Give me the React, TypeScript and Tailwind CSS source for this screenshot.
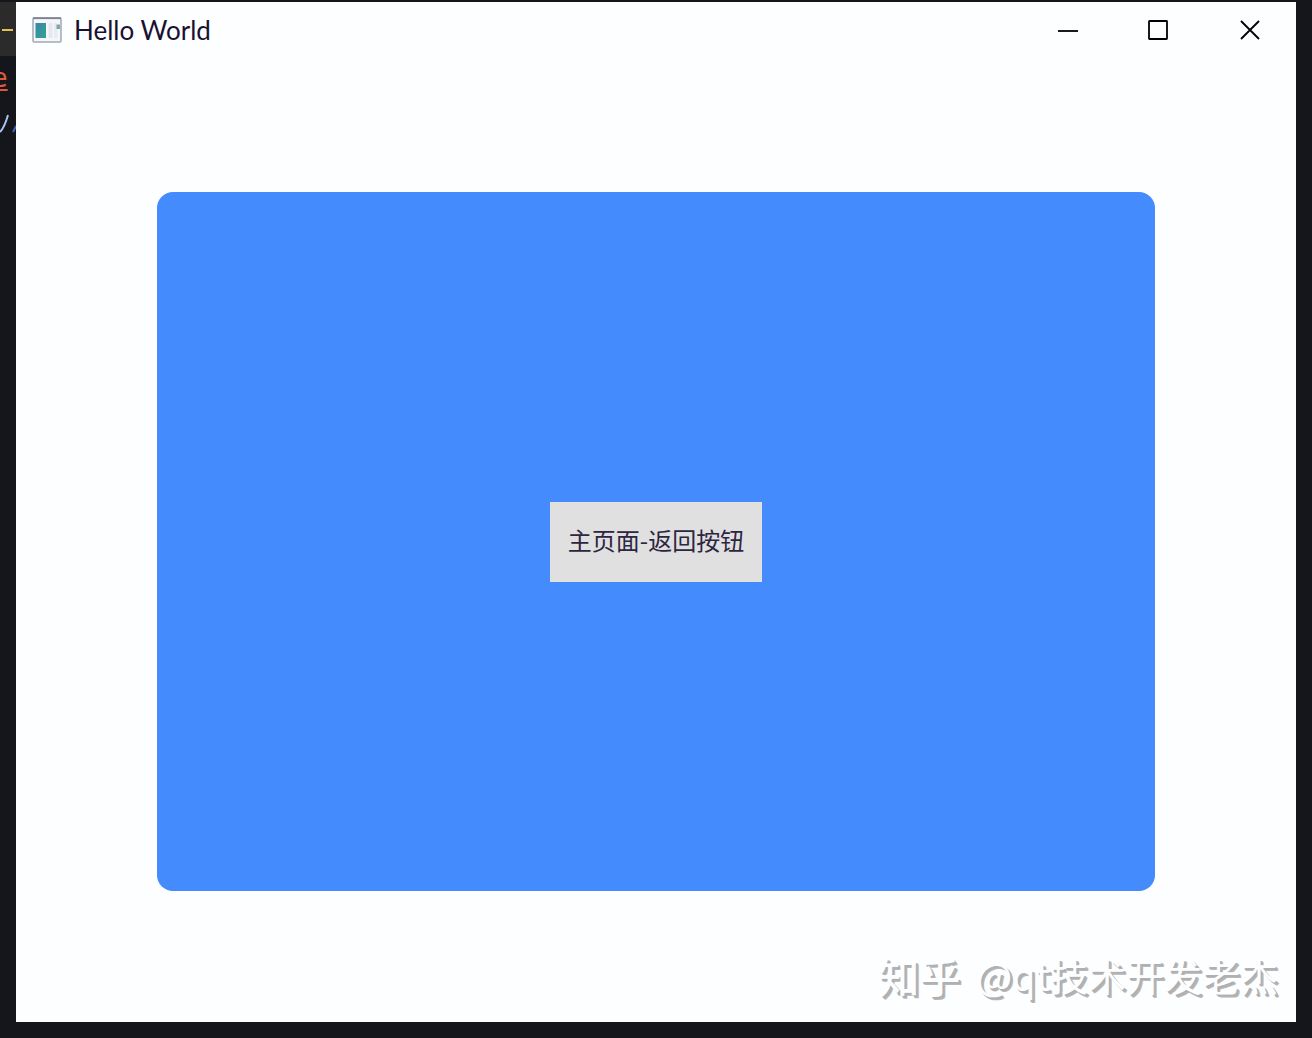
import type { ReactNode } from "react";

function AppIcon() {
  return (
    <svg width="30" height="26" viewBox="0 0 30 26" aria-hidden="true">
      <defs>
        <linearGradient id="pane" x1="0" y1="0" x2="1" y2="1">
          <stop offset="0" stopColor="#3a86a8" />
          <stop offset="1" stopColor="#34a391" />
        </linearGradient>
      </defs>
      <rect x="1" y="1" width="28" height="24" rx="1" fill="#f4f6fa" stroke="#a3a8b4" strokeWidth="1.5" />
      <path d="M1 1.2h28" stroke="#7d8292" strokeWidth="1.8" />
      <rect x="3.5" y="6" width="10.5" height="15" fill="url(#pane)" />
      <rect x="16.5" y="6" width="4" height="15" fill="#e6e8ee" />
      <rect x="22" y="6" width="3.5" height="15" fill="#e9ebf0" />
      <path d="M24.5 7.5h3.5v4.5h-3.5z" fill="#7fa6ab" />
    </svg>
  );
}

function WindowButton({ label, children }: { label: string; children: ReactNode }) {
  return (
    <button
      type="button"
      aria-label={label}
      className="flex h-14 w-[91px] items-center justify-center text-black hover:bg-neutral-200"
    >
      <svg width="22" height="22" viewBox="0 0 22 22" fill="none" stroke="currentColor" strokeWidth="1.8">
        {children}
      </svg>
    </button>
  );
}

function TitleBar() {
  return (
    <header className="flex h-14 items-center pr-px pl-4">
      <AppIcon />
      <h1 className="ml-3 flex-1 font-['Lato','Noto_Sans',sans-serif] text-[26px] leading-8 text-[#1a1030]">
        Hello World
      </h1>
      <WindowButton label="Minimize">
        <path d="M1 12h20" />
      </WindowButton>
      <WindowButton label="Maximize">
        <rect x="1" y="2" width="18" height="18" rx="0.5" />
      </WindowButton>
      <WindowButton label="Close">
        <path d="M2 2l18 18M20 2L2 20" />
      </WindowButton>
    </header>
  );
}

// the strip of the code editor that shows left of the window
function EditorEdge() {
  return (
    <div className="w-4 overflow-hidden font-['DejaVu_Sans_Mono',monospace] text-[26px]" aria-hidden="true">
      <div className="flex h-[54px] items-center bg-[#2b2b2c]">
        <svg width="16" height="4" viewBox="0 0 16 4">
          <path d="M2 3h11" stroke="#e3c04f" strokeWidth="2" />
        </svg>
      </div>
      <div className="flex h-11 items-center">
        <span className="-ml-2 text-[#e0583c] underline underline-offset-2">e</span>
      </div>
      <svg width="16" height="40" viewBox="0 0 16 40" fill="none" strokeWidth="2">
        <path d="M8 15C6 22 3 29 0 32" stroke="#a9c1f5" />
        <path d="M16 26l-3 6" stroke="#3f63b5" />
      </svg>
    </div>
  );
}

export default function App() {
  return (
    <div className="flex min-h-screen bg-[#15161c] pt-0.5 pr-4 pb-4">
      <EditorEdge />
      <main className="flex flex-1 flex-col bg-[#fdfeff]">
        <TitleBar />
        <section className="mx-[141px] mt-[134px] flex flex-1 items-center justify-center rounded-2xl bg-[#448bfd]">
          <button
            type="button"
            className="h-20 w-[212px] bg-[#e0e0e0] pb-1 font-['Noto_Sans_CJK_SC',sans-serif] text-[24px] leading-8 text-[#2d2640] hover:bg-[#d0d0d0]"
          >
            主页面-返回按钮
          </button>
        </section>
        <footer className="flex h-[131px] items-center justify-end pt-9 pr-[18px] font-['Noto_Sans_CJK_SC',sans-serif] text-[38px] leading-[56px] text-[#fdfeff] [text-shadow:2px_2px_0_#b0b0b0,3px_3px_0_#b8b8b8]">
          <span className="text-[41px] font-medium">知乎</span>
          <span className="ml-4">@qt技术开发老杰</span>
        </footer>
      </main>
    </div>
  );
}
